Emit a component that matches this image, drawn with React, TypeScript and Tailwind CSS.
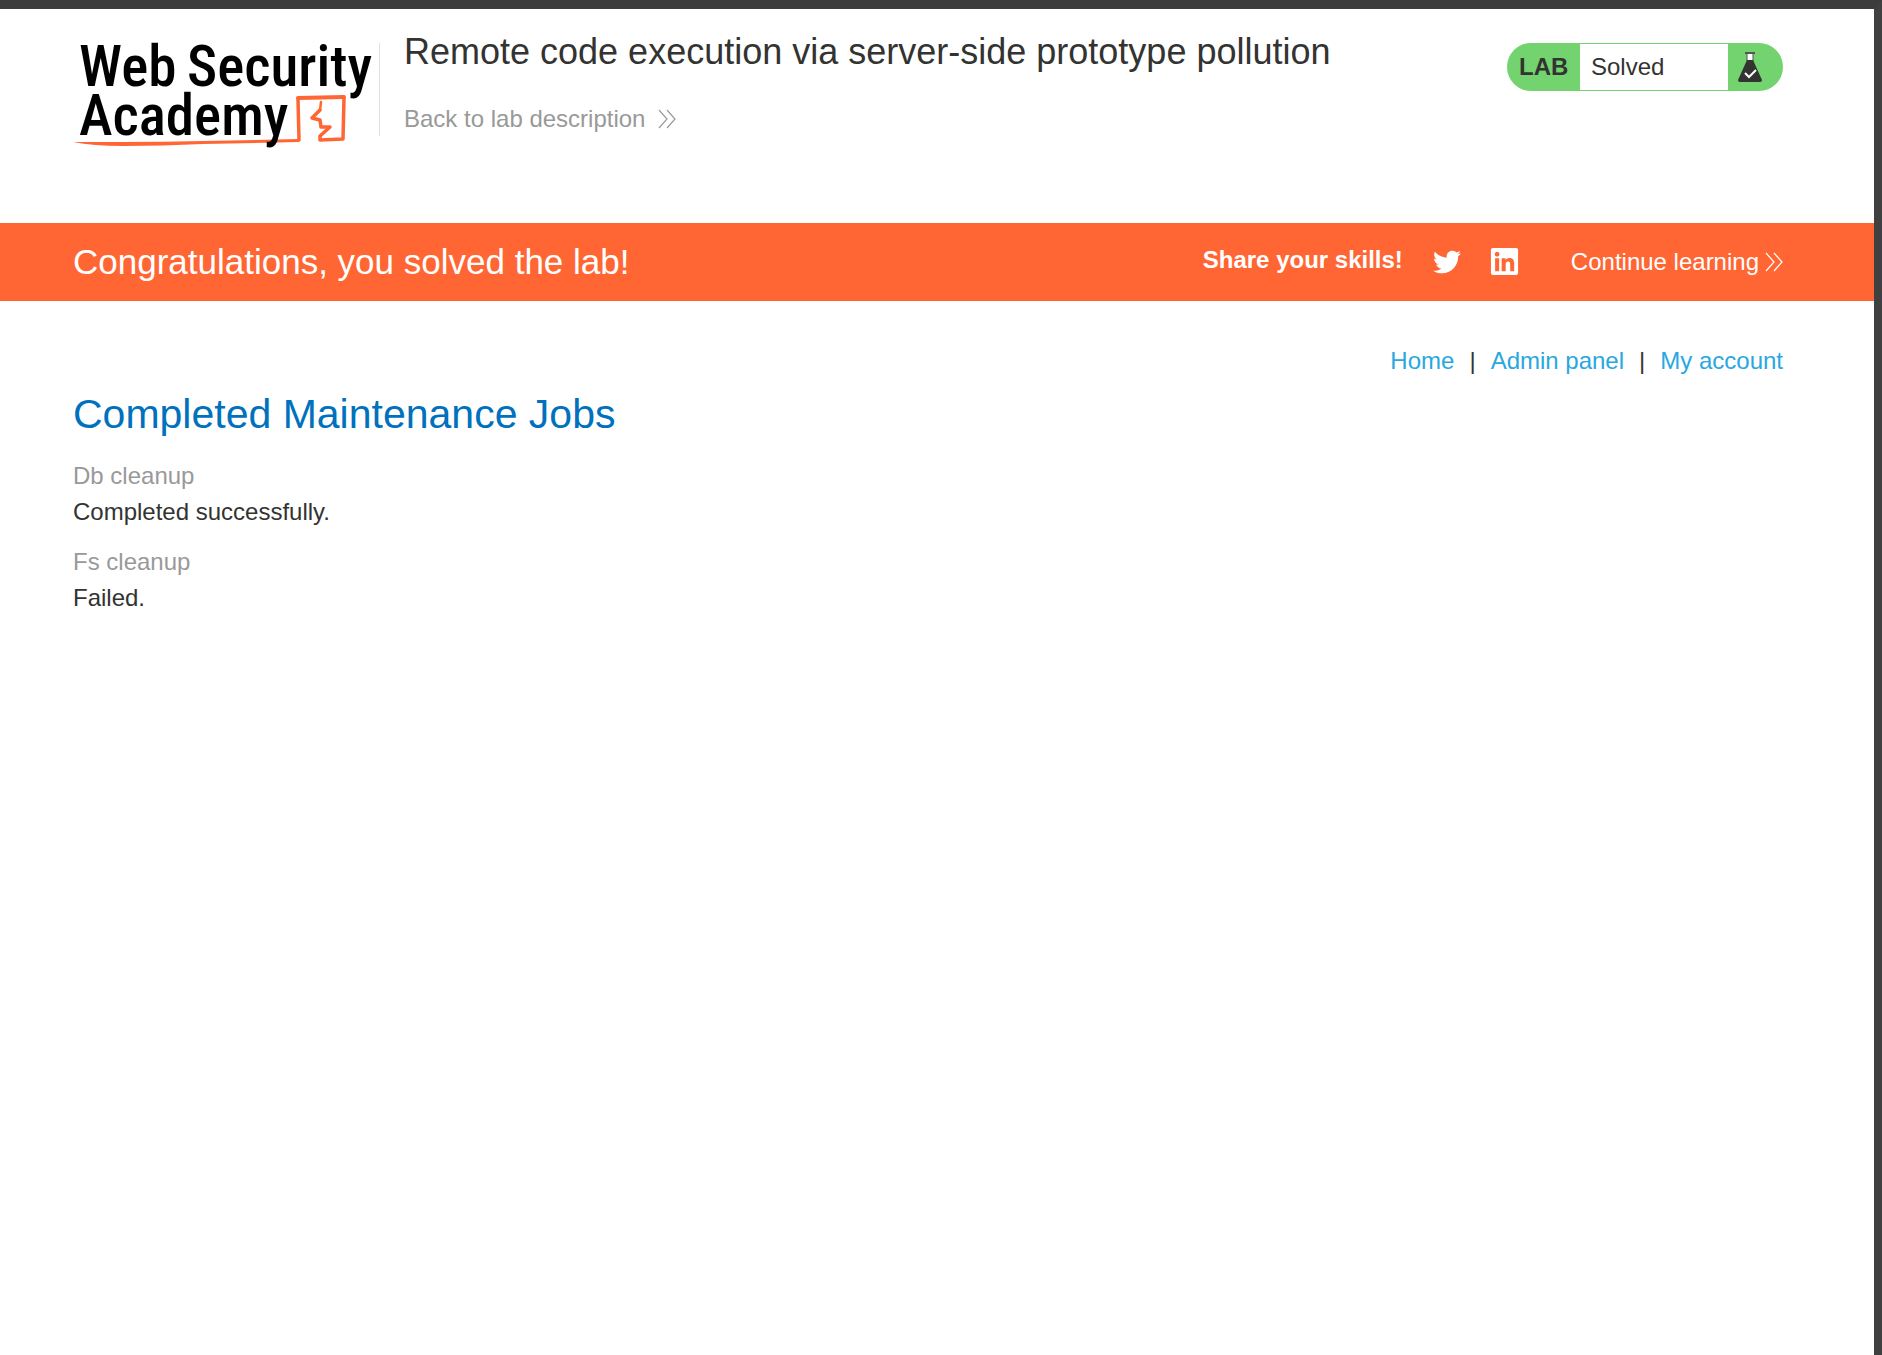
import { FaTwitter, FaLinkedin } from 'react-icons/fa'

function Chevrons({ className }: { className: string }) {
  return (
    <svg viewBox="0 0 18 20" className={className} fill="none" stroke="currentColor" strokeWidth="1.2" aria-hidden="true">
      <path d="M1 1 L9 10 L1 19 M9 1 L17 10 L9 19" />
    </svg>
  )
}

function Logo() {
  return (
    <svg viewBox="0 -16 306 130" className="h-[130px] w-[306px]" role="img" aria-label="Web Security Academy">
      <g fill="none" stroke="#ff6633" strokeLinejoin="round" strokeLinecap="round">
        <path d="M225 58 L271 57" strokeWidth="4" />
        <path
          d="M225 59 L226 100 M271 58 L270 99 L247 100 L247 96 L257 87 L248 87 L247 80 L239 78 L247 70"
          strokeWidth="3.5"
        />
        <path d="M247 70 L248 62" strokeWidth="2.5" />
      </g>
      <path
        d="M0 102 Q20 102 50 102 Q90 102 130 101 Q180 100 226 99 V102 Q180 103 130 104 Q90 106 50 106 Q20 106 0 102 Z"
        fill="#ff6633"
      />
      <g fill="#000" fontSize="57" fontWeight="500" fontFamily="'Roboto Condensed', Roboto, sans-serif">
        <text x="6" y="46">Web</text>
        <text x="114" y="46">Security</text>
        <text x="6" y="95">Academy</text>
      </g>
    </svg>
  )
}

function Flask() {
  return (
    <svg viewBox="0 0 24 30" className="h-[30px] w-6" aria-hidden="true">
      <path d="M9 1 H15 V9 H9 Z" fill="#fff" stroke="#555" />
      <path d="M7 1 H17" stroke="#555" strokeWidth="2" />
      <path d="M9 8 H15 L24 28 Q24 30 22 30 H2 Q0 30 0 28 Z" fill="#333332" />
      <path d="M7 21 L11 25 L18 18" fill="none" stroke="#fff" strokeWidth="2" />
    </svg>
  )
}

const jobs = [
  { name: 'Db cleanup', result: 'Completed successfully.' },
  { name: 'Fs cleanup', result: 'Failed.' },
]

export default function App() {
  return (
    <div className="min-h-screen border-t-9 border-r-8 border-t-[#3c3c3c] border-r-[#404040] bg-white font-['Liberation_Sans',Arial,sans-serif] text-2xl/9 text-[#333332]">
      <header className="flex h-[214px] items-start pt-[15px] pr-[91px] pl-[73px]">
        <Logo />
        <div className="mt-[19px] h-[93px] w-px bg-[#e0e0e0]" />
        <div className="mt-[6px] ml-6 flex-1">
          <h2 className="text-[36px]/11">Remote code execution via server-side prototype pollution</h2>
          <a href="#" className="mt-[27px] flex items-center gap-[13px] text-[#999]">
            Back to lab description
            <Chevrons className="h-5 w-[18px]" />
          </a>
        </div>
        <div className="mt-[19px] flex h-12 w-[276px] items-stretch overflow-hidden rounded-3xl bg-[#72d36f] leading-[46px]">
          <p className="w-[73px] pt-px pl-3 font-bold">LAB</p>
          <p className="my-px w-[148px] bg-white pl-[11px]">Solved</p>
          <div className="pt-[9px] pl-[10px]"><Flask /></div>
        </div>
      </header>
      <section className="flex h-[78px] items-center bg-[#ff6633] pr-[91px] pl-[73px] text-white">
        <h4 className="flex-1 text-[35px]">Congratulations, you solved the lab!</h4>
        <p className="pb-1 font-bold">Share your skills!</p>
        <a href="#" aria-label="Twitter" className="ml-[30px]"><FaTwitter className="size-7" /></a>
        <a href="#" aria-label="LinkedIn" className="ml-7 pb-[2px]"><FaLinkedin className="size-[31px]" /></a>
        <a href="#" className="ml-[51px] flex items-center gap-[6px]">
          Continue learning
          <Chevrons className="h-5 w-[18px]" />
        </a>
      </section>
      <main className="pt-[42px] pr-[91px] pl-[73px]">
        <nav className="flex justify-end gap-[15px] text-[#29a7df]">
          <a href="#">Home</a>
          <span className="text-[#333332]">|</span>
          <a href="#">Admin panel</a>
          <span className="text-[#333332]">|</span>
          <a href="#">My account</a>
        </nav>
        <h1 className="mt-2 text-[41px]/[54px] text-[#0071bc]">Completed Maintenance Jobs</h1>
        <dl className="mt-[17px] flex flex-col gap-[14px]">
          {jobs.map((job) => (
            <div key={job.name}>
              <dt className="text-[#999]">{job.name}</dt>
              <dd>{job.result}</dd>
            </div>
          ))}
        </dl>
      </main>
    </div>
  )
}
